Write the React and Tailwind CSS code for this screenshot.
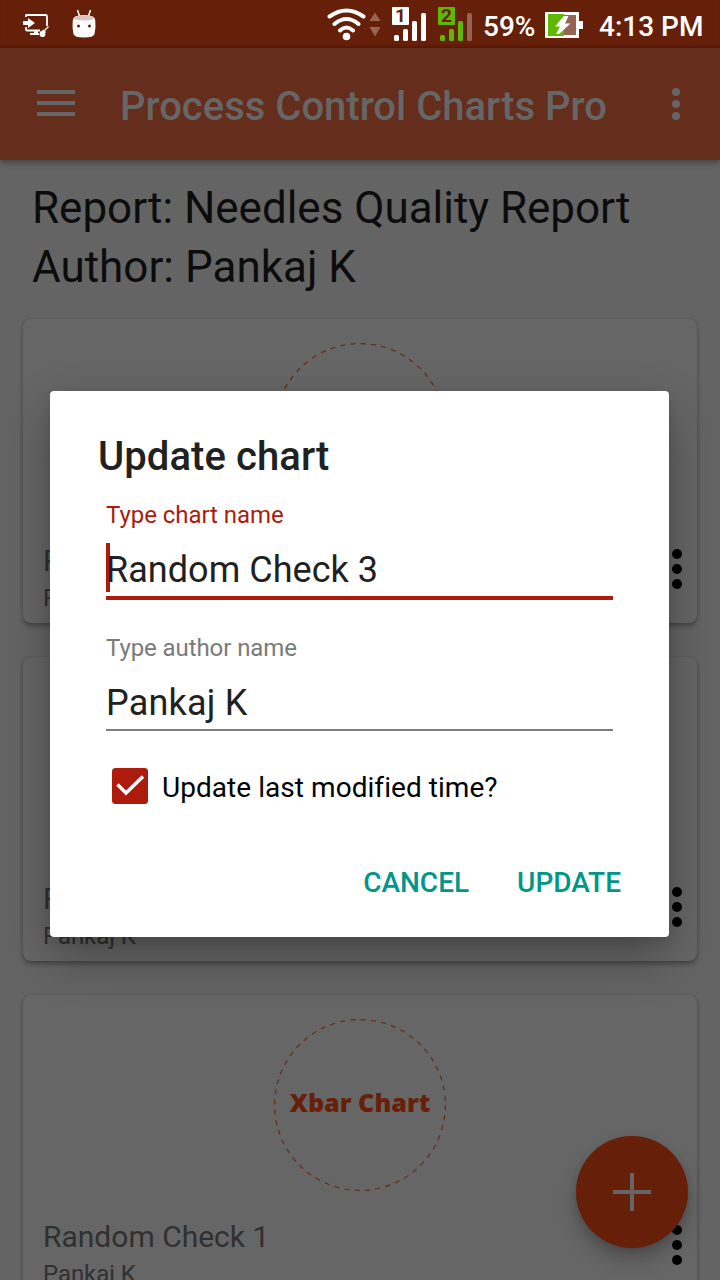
function StatusBar() {
  return (
    <header className="relative z-20 flex h-12 w-full shrink-0 items-center bg-[#661f08] shadow-[inset_0_-3px_3px_-2px_rgba(0,0,0,0.3)]">
      <svg className="ml-[22px] h-[26px] w-7 shrink-0" viewBox="0 0 28 26" fill="none">
        <path d="M4 6V4.500Q4 4 4.500 4H23.500Q25 4 25 5.500V15M4 16V18.500Q4 19.500 5 19.500H18" stroke="#fff" strokeWidth="1.800" />
        <path d="M1 10H6V7L13 12L6 17V14H1Z" fill="#fff" />
        <path d="M12 19h4v3h-4z M8 22h9v2H8z" fill="#fff" />
        <path d="M26.500 15.500L22 20" stroke="#fff" strokeWidth="1.300" />
        <path d="M18 20.500l2-.5 1-1.500 3 2.500-1 1.500.5 1.500-1.500 2h-3l-1.500-2z" fill="#fff" />
      </svg>
      <svg className="-mt-[3px] ml-[22px] h-[30px] w-6 shrink-0" viewBox="0 0 24 30">
        <path d="M5.500 2l2 6M18.500 2l-2 6" stroke="#fff" strokeWidth="1.500" />
        <path d="M0.700 13Q0.300 7 12 7T23.300 13Q24 20 22.500 26Q21.500 29.500 12 29.500T1.500 26Q0 20 0.700 13Z" fill="#fff" />
        <ellipse cx="12" cy="10" rx="10.500" ry="2.500" fill="#d9c5bf" />
        <circle cx="6.500" cy="18" r="1.500" fill="#661f08" />
        <circle cx="17.500" cy="18" r="1.500" fill="#661f08" />
      </svg>
      <svg className="ml-[231px] h-12 w-[56px] shrink-0" viewBox="327 0 56 48" fill="none">
        <path d="M329.500 16.500Q346.500 4.500 363.500 16.500M334.500 24Q346.500 14 358.500 24M340 30.500Q346.500 24.500 353 30.500" stroke="#fff" strokeWidth="4" strokeLinecap="round" />
        <circle cx="346.500" cy="36.500" r="3.800" fill="#fff" />
        <path d="M369.500 21L375 12.500L380.500 21ZM369.500 27H380.500L375 36.500Z" fill="#976353" />
      </svg>
      <svg className="ml-2 h-12 w-[84px] shrink-0" viewBox="391 0 84 48">
        <rect x="392" y="7" width="17" height="18" rx="1" fill="#fff" />
        <text x="400.500" y="22" textAnchor="middle" fontFamily="Roboto, sans-serif" fontWeight="700" fontSize="19" fill="#661f08">1</text>
        <rect x="394" y="35" width="5" height="6" rx="1.500" fill="#fff" />
        <rect x="403" y="29" width="5" height="12" rx="1.500" fill="#fff" />
        <rect x="412" y="21" width="5" height="20" rx="1.500" fill="#fff" />
        <rect x="421" y="13" width="5" height="28" rx="1.500" fill="#fff" />
        <rect x="438" y="7" width="17" height="18" rx="1" fill="#5eb800" />
        <text x="446.500" y="22" textAnchor="middle" fontFamily="Roboto, sans-serif" fontWeight="700" fontSize="19" fill="#661f08">2</text>
        <rect x="440" y="35" width="5" height="6" rx="1.500" fill="#5eb800" />
        <rect x="449" y="29" width="5" height="12" rx="1.500" fill="#5eb800" />
        <rect x="458" y="21" width="5" height="20" rx="1.500" fill="#5eb800" />
        <rect x="467" y="13" width="5" height="28" rx="1.500" fill="#976353" />
      </svg>
      <span className="ml-2 mt-[5px] w-[62px] shrink-0 whitespace-nowrap text-[28px] font-medium leading-8 text-white">59%</span>
      <svg className="h-12 w-10 shrink-0" viewBox="545 0 40 48">
        <rect x="546.500" y="13.500" width="31" height="23" fill="#976353" stroke="#fff" strokeWidth="3" />
        <rect x="548" y="14" width="16" height="22" fill="#5eb800" />
        <rect x="578" y="21" width="5" height="8" fill="#fff" />
        <path d="M564 16H568.500L565 23.500H570.500L559 34H556L560 26.500H555Z" fill="#fff" />
      </svg>
      <span className="ml-[14px] mt-[5px] shrink-0 whitespace-nowrap text-[28px] font-medium leading-8 text-white">4:13 PM</span>
    </header>
  );
}

function AppBar() {
  return (
    <div className="relative z-10 flex h-28 shrink-0 items-center bg-[#652d1b] shadow-[0_3px_6px_rgba(0,0,0,0.3)]">
      <div className="ml-[37px] flex w-[38px] flex-col gap-[7px] pb-[2px]">
        <span className="h-1 bg-[#666]" />
        <span className="h-1 bg-[#666]" />
        <span className="h-1 bg-[#666]" />
      </div>
      <h1 className="ml-[45px] mt-[5px] whitespace-nowrap text-[40px] font-medium leading-[48px] text-[#666]">Process Control Charts Pro</h1>
      <div className="ml-auto mr-10 flex flex-col gap-1">
        <span className="size-2 rounded-full bg-[#666]" />
        <span className="size-2 rounded-full bg-[#666]" />
        <span className="size-2 rounded-full bg-[#666]" />
      </div>
    </div>
  );
}

function ChartCard({ name }) {
  return (
    <article className="flex h-[304px] shrink-0 flex-col rounded-[8px] bg-[#666] pl-5 pr-[15px] pt-6 shadow-[0_3px_5px_rgba(0,0,0,0.3),0_0_2px_rgba(0,0,0,0.15)]">
      <svg className="ml-[231px] size-[172px] shrink-0" viewBox="0 0 172 172">
        <circle cx="86" cy="86" r="85.400" fill="none" stroke="#6b2a15" strokeWidth="1.200" strokeDasharray="5.100 5.220" />
        <text x="86" y="92.500" textAnchor="middle" fontFamily="Open Sans, sans-serif" fontWeight="800" fontSize="25.150" fill="#661f08">Xbar Chart</text>
      </svg>
      <div className="mt-[26px] flex justify-between">
        <div className="whitespace-nowrap text-[#303030]">
          <div className="text-[30px] leading-10">{name}</div>
          <div className="mt-px text-[24px] leading-8 tracking-[-0.08px]">Pankaj K</div>
        </div>
        <div className="mt-2 flex flex-col gap-[5px]">
          <span className="size-2.5 rounded-full bg-black" />
          <span className="size-2.5 rounded-full bg-black" />
          <span className="size-2.5 rounded-full bg-black" />
        </div>
      </div>
    </article>
  );
}

function UpdateDialog() {
  return (
    <section role="dialog" className="absolute left-[50px] top-[391px] z-30 flex h-[546px] w-[619px] flex-col rounded-[4px] bg-white px-12 shadow-[0_20px_48px_rgba(0,0,0,0.3),0_4px_12px_rgba(0,0,0,0.08)]">
      <h2 className="mt-[42px] whitespace-nowrap text-[40px] font-medium leading-[48px] tracking-[0.08px] text-[#212121]">Update chart</h2>
      <div className="mx-2 mt-[18px] flex flex-col">
        <label className="text-[24px] leading-8 tracking-[-0.05px] text-[#ad1b0c]">Type chart name</label>
        <div className="relative mt-3 h-[53px] border-l-4 border-transparent">
          <span className="absolute -left-1 top-0 h-[49px] w-1 bg-[#ad1b0c]" />
          <span className="relative -left-1 top-[3px] whitespace-nowrap text-[36px] leading-[48px] tracking-[0.04px] text-[#212121]">Random Check 3</span>
        </div>
        <div className="h-1 bg-[#ad1b0c]" />
        <label className="mt-8 text-[24px] leading-8 tracking-[-0.08px] text-[#7a7a7a]">Type author name</label>
        <div className="mt-[15px] h-[52px] whitespace-nowrap border-b-2 border-[#7d7d7d] text-[36px] leading-[48px] tracking-[0.2px] text-[#212121]">Pankaj K</div>
      </div>
      <label className="ml-[14px] mt-[37px] flex h-9 items-center gap-[14px] whitespace-nowrap text-[28px] tracking-[0.05px] text-black">
        <svg className="size-9 shrink-0" viewBox="0 0 36 36" fill="none">
          <rect width="36" height="36" rx="3.500" fill="#ad1b0c" />
          <path d="M5.500 16.500L14 25L31 8.500" stroke="#fff" strokeWidth="3.500" />
        </svg>
        <span className="mt-[3px]">Update last modified time?</span>
      </label>
      <div className="mt-[63px] flex justify-end gap-12 whitespace-nowrap text-[28px] font-medium leading-8 text-[#009688]">
        <button>CANCEL</button>
        <button>UPDATE</button>
      </div>
    </section>
  );
}

export default function App() {
  return (
    <main className="relative flex h-[1280px] w-[720px] flex-col overflow-hidden bg-[#646464] font-['Roboto',sans-serif]">
      <StatusBar />
      <AppBar />
      <div className="ml-8 mt-[19px] shrink-0 whitespace-nowrap text-[44px] leading-[59px] text-[#0c0c0c]">
        <p className="tracking-[-0.03px]">Report: Needles Quality Report</p>
        <p>Author: Pankaj K</p>
      </div>
      <div className="mx-[23px] mt-[22px] flex flex-col gap-[34px]">
        <ChartCard name="Random Check 3" />
        <ChartCard name="Random Check 2" />
        <ChartCard name="Random Check 1" />
      </div>
      <button aria-label="Add chart" className="absolute left-[576px] top-[1136px] z-10 flex size-28 items-center justify-center rounded-full bg-[#661f08] shadow-[0_12px_20px_rgba(0,0,0,0.22),0_3px_8px_rgba(0,0,0,0.12)]">
        <svg className="size-[38px]" viewBox="0 0 38 38">
          <path d="M0 17H17V0H21V17H38V21H21V38H17V21H0Z" fill="#666" />
        </svg>
      </button>
      <UpdateDialog />
    </main>
  );
}
